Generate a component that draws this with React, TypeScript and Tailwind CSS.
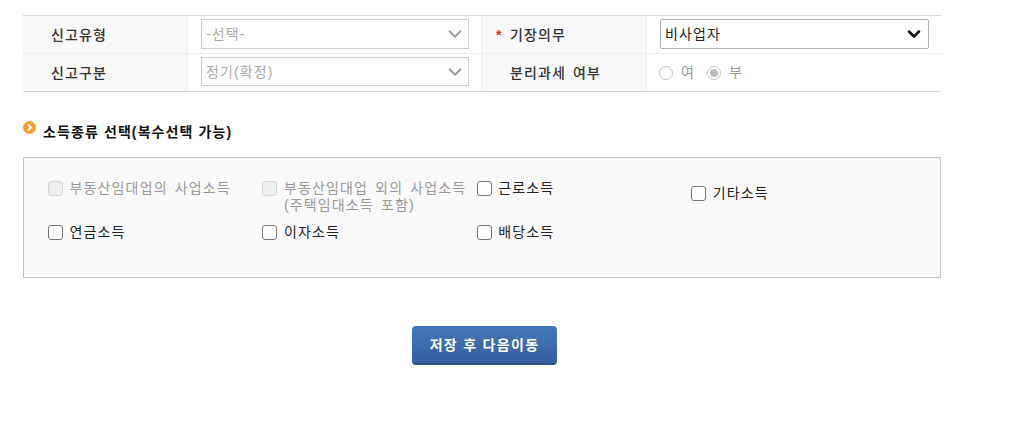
import { ChevronDown } from 'lucide-react'

const font = "[font-family:'Liberation_Sans','Noto_Sans_CJK_KR',sans-serif]"

function Th({ children, required }: { children: string; required?: boolean }) {
  return (
    <div className="h-[37px] pt-[2px] bg-[#f8f8f8] flex items-center text-[14px] font-medium tracking-[1.1px] [word-spacing:2px] text-[#333] border-r border-[#eee]">
      <span className="w-7 shrink-0 pl-[14px] text-[#d9302c] font-bold">{required ? '*' : ''}</span>
      {children}
    </div>
  )
}

function Select({ value, disabled, short }: { value: string; disabled?: boolean; short?: boolean }) {
  return (
    <div
      className={`${short ? 'h-[29px]' : 'h-[30px]'} flex items-center justify-between pl-[4px] border text-[14px] bg-white ${
        disabled ? 'border-[#cfcfcf] text-[#aaa] pr-[2px]' : 'border-[#b0b0b0] rounded-[2px] text-[#222] pr-[4px]'
      }`}
    >
      <span className="pt-[1px] tracking-[1.1px]">{value}</span>
      <ChevronDown
        size={disabled ? 22 : 20}
        strokeWidth={disabled ? 2 : 3}
        className={disabled ? 'text-[#999]' : 'text-[#111]'}
      />
    </div>
  )
}

function Radio({ label, checked }: { label: string; checked?: boolean }) {
  return (
    <label className="flex items-center gap-[8px] text-[14px] text-[#999]">
      <span className="w-[14px] h-[14px] rounded-full border border-[#c4c4c4] bg-white flex items-center justify-center">
        {checked && <span className="w-2 h-2 rounded-full bg-[#bdbdbd]" />}
      </span>
      {label}
    </label>
  )
}

function Check({ label, sub, disabled, className = '' }: { label: string; sub?: string; disabled?: boolean; className?: string }) {
  return (
    <div className={`flex items-start gap-[6.5px] text-[14px] leading-[17px] tracking-[1.15px] [word-spacing:2px] ${disabled ? 'text-[#999]' : 'text-[#222]'} ${className}`}>
      <span
        className={`mt-[1px] w-[15px] h-[15px] shrink-0 rounded-[3px] ${
          disabled ? 'border border-[#d6d6d6] bg-[#eee]' : 'border-[1.5px] border-[#767676] bg-white'
        }`}
      />
      <span>
        {label}
        {sub && <span className="block">{sub}</span>}
      </span>
    </div>
  )
}

export default function App() {
  return (
    <div className={`${font} w-[1025px] h-[424px] bg-white pt-[15px] pl-[23px] overflow-hidden`}>
      <div className="w-[918px] border-t border-b border-[#d8d8d8]">
        <div className="grid grid-cols-[165px_294px_165px_294px] border-b border-[#eee]">
          <Th>신고유형</Th>
          <div className="pl-[13px] pr-[12px] pt-[3px] border-r border-[#eee]">
            <Select value="-선택-" disabled />
          </div>
          <Th required>기장의무</Th>
          <div className="pl-[13px] pr-[12px] pt-[3px]">
            <Select value="비사업자" />
          </div>
        </div>
        <div className="grid grid-cols-[165px_294px_165px_294px]">
          <Th>신고구분</Th>
          <div className="pl-[13px] pr-[12px] pt-[3px] border-r border-[#eee]">
            <Select value="정기(확정)" disabled short />
          </div>
          <Th>분리과세 여부</Th>
          <div className="pl-[12px] flex items-center gap-[13px]">
            <Radio label="여" />
            <Radio label="부" checked />
          </div>
        </div>
      </div>

      <div className="mt-[29px] flex items-start gap-[7px] w-[918px]">
        <svg width="13" height="13" viewBox="0 0 13 13" className="shrink-0">
          <circle cx="6.5" cy="6.5" r="6.5" fill="#f0a030" />
          <path d="M5 3.5 8 6.5 5 9.5" fill="none" stroke="#fff" strokeWidth="1.8" />
        </svg>
        <span className="mt-[2px] text-[14px] leading-[18px] font-bold tracking-[1.1px] text-[#111]">
          소득종류 선택(복수선택 가능)
        </span>
      </div>

      <div className="mt-[16px] w-[918px] h-[121px] bg-[#f9f9f9] border border-[#c4c4c4] pl-[24px] pt-[22px]">
        <div className="grid grid-cols-[214.4px_214.4px_214.4px_214.4px]">
          <Check label="부동산임대업의 사업소득" disabled />
          <Check label="부동산임대업 외의 사업소득" sub="(주택임대소득 포함)" disabled />
          <Check label="근로소득" />
          <Check label="기타소득" className="mt-[5px]" />
          <Check label="연금소득" className="mt-[10px]" />
          <Check label="이자소득" className="mt-[10px]" />
          <Check label="배당소득" className="mt-[10px]" />
        </div>
      </div>

      <div className="mt-[48px] w-[923px] flex justify-center">
        <button className="w-[145px] h-[39px] pt-[2px] rounded-[4px] bg-gradient-to-b from-[#4479b8] to-[#335f9e] border-b-2 border-[#2c5288] text-white text-[14px] font-bold tracking-[1.3px]">
          저장 후 다음이동
        </button>
      </div>
    </div>
  )
}
